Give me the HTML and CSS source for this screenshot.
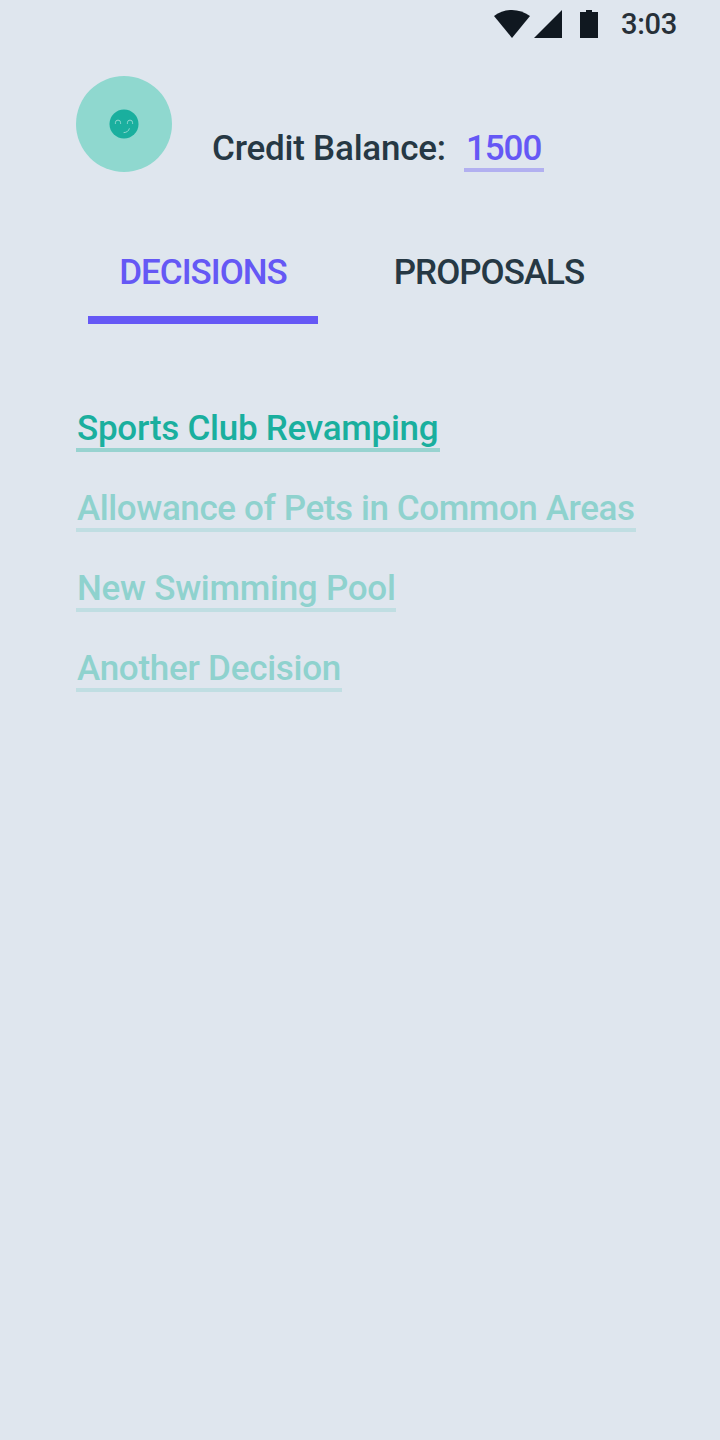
FILE: index.html
```html
<!DOCTYPE html>
<html lang="en">
<head>
<meta charset="utf-8">
<title>Decisions</title>
<link rel="stylesheet" href="styles.css">
</head>
<body>
<div class="status">
  <svg class="status-icons" width="106" height="30" viewBox="0 0 106 30">
    <path d="M0 8C11 0 25 0 36 8L18 30Z"/>
    <path d="M40 30L68 2V30Z"/>
    <path d="M86 4H92V2H98V4H104V30H86Z"/>
  </svg>
  <span class="clock">3:03</span>
</div>
<header class="account">
  <svg class="avatar" width="96" height="96" viewBox="0 0 96 96">
    <circle class="avatar-ring" cx="48" cy="48" r="48"/>
    <circle class="avatar-face" cx="48" cy="48" r="14.5"/>
    <path class="avatar-line" d="M39.4 47.5V46.7A2.6 2.6 0 0 1 44.6 46.7V47.5M51.4 47.5V46.7A2.6 2.6 0 0 1 56.6 46.7V47.5M48 56.6Q52.5 56.3 53.3 52.7"/>
  </svg>
  <span class="balance-label">Credit Balance:</span>
  <a class="balance">1500</a>
</header>
<nav class="tabs">
  <a class="tab active">DECISIONS</a>
  <a class="tab second">PROPOSALS</a>
</nav>
<main class="list">
  <a class="item current sports">Sports Club Revamping</a>
  <a class="item pets">Allowance of Pets in Common Areas</a>
  <a class="item pool">New Swimming Pool</a>
  <a class="item another">Another Decision</a>
</main>
</body>
</html>
```
FILE: styles.css
```css
* { box-sizing: border-box; }
body {
  margin: 0;
  width: 720px;
  height: 1440px;
  overflow: hidden;
  background: #dfe6ee;
  color: #263844;
  font: 500 35px/42px Roboto, sans-serif;
  white-space: nowrap;
}
.status {
  display: flex;
  height: 76px;
  padding: 8px 0 0 494px;
}
.status-icons { fill: #101820; }
.clock {
  margin-left: 21px;
  color: #273038;
  font-size: 29px;
  line-height: 32px;
  letter-spacing: -0.3px;
}
.account {
  display: flex;
  height: 96px;
  padding-left: 76px;
}
.avatar-ring { fill: #8fd8cf; }
.avatar-face { fill: #1aaf9e; }
.avatar-line {
  fill: none;
  stroke: #8fd8cf;
  stroke-width: 1;
  stroke-linecap: round;
}
.balance-label {
  width: 252px;
  margin-left: 40px;
  padding-top: 52px;
  letter-spacing: -0.22px;
}
.balance {
  width: 80px;
  height: 44px;
  margin-top: 52px;
  padding-left: 2px;
  border-bottom: 4px solid #b2b0f0;
  color: #6558f5;
  letter-spacing: -1.1px;
}
.tabs {
  display: flex;
  margin-top: 80px;
  padding-left: 88px;
}
.tab {
  height: 72px;
  width: 230px;
  text-align: center;
  letter-spacing: -1px;
}
.tab.active {
  border-bottom: 8px solid #6558f5;
  color: #6558f5;
}
.tab.second { margin-left: 56px; }
.list {
  display: flex;
  flex-direction: column;
  align-items: flex-start;
  gap: 36px;
  padding: 84px 0 0 76px;
}
.item {
  height: 44px;
  padding-left: 1px;
  border-bottom: 4px solid #c0dee2;
  color: #8fd2ce;
  letter-spacing: -0.26px;
}
.item.current {
  border-color: #98d3d0;
  color: #1aaf9e;
}
.sports { width: 364px; }
.pets { width: 560px; letter-spacing: -0.4px; }
.pool { width: 320px; }
.another { width: 266px; }
```
